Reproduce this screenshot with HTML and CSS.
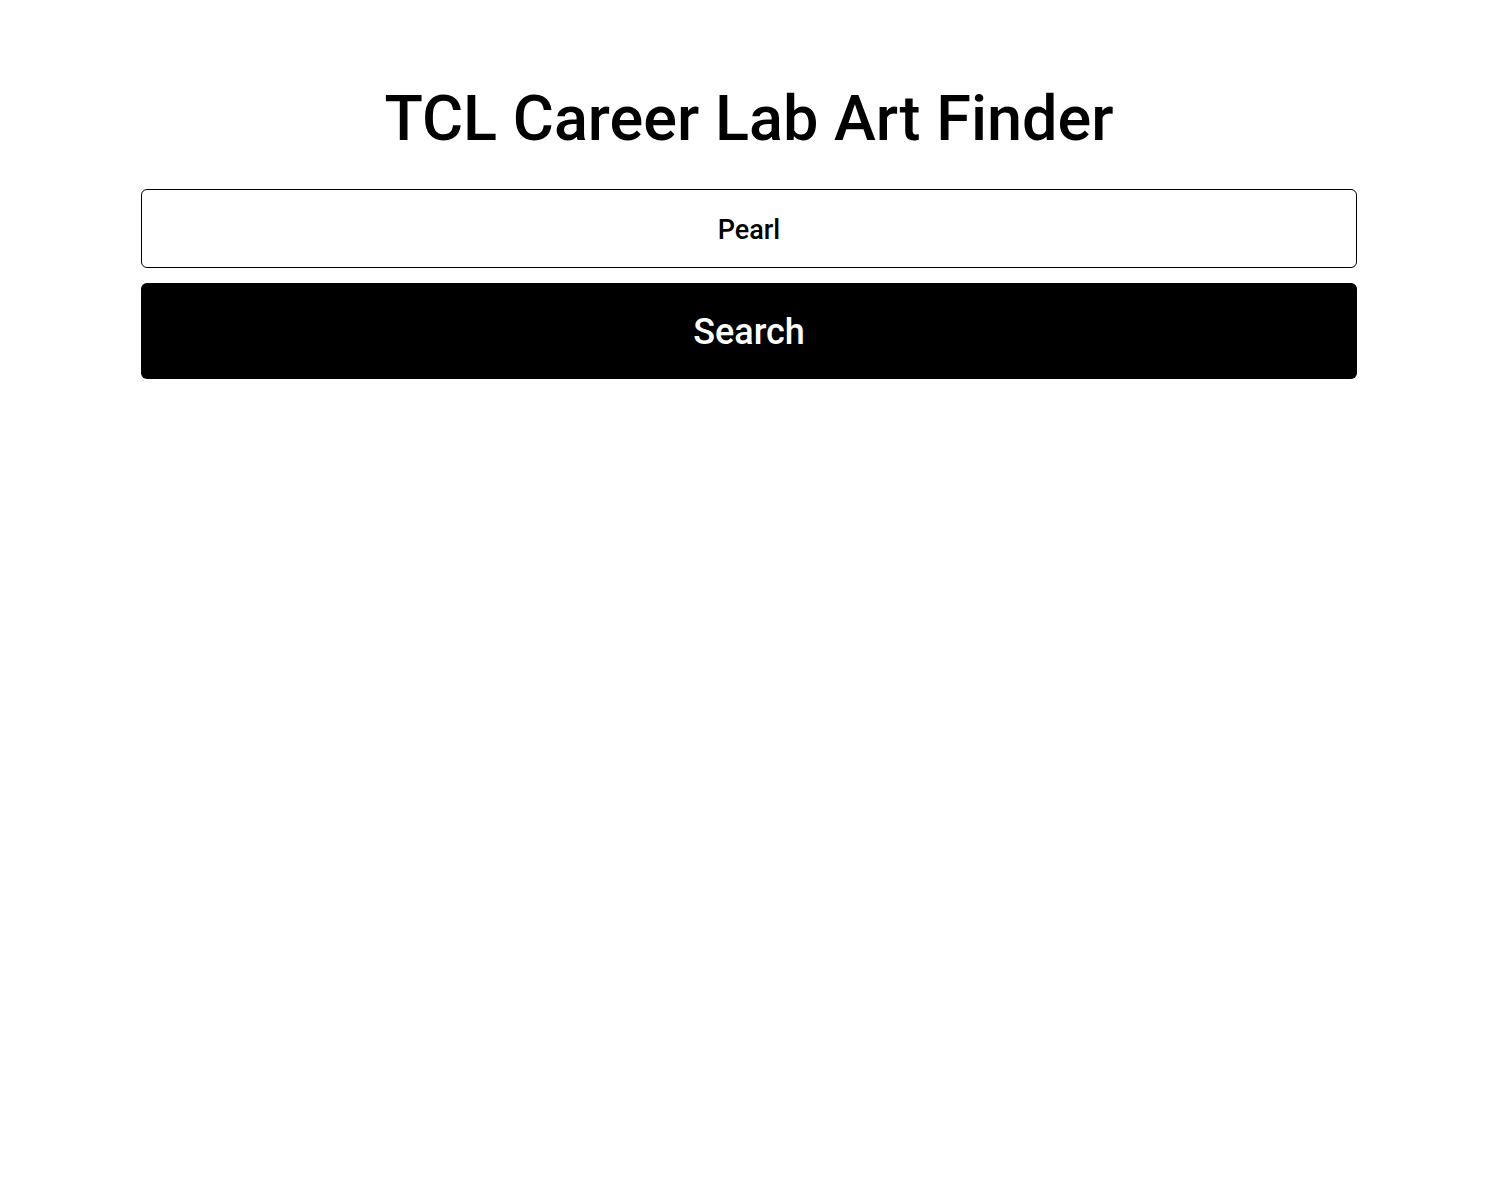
FILE: index.html
```html
<!DOCTYPE html>
<html>
<head>
<meta charset="utf-8">
<link rel="stylesheet" href="styles.css">
</head>
<body>
<main class="page">
  <h1 class="title">TCL Career Lab Art Finder</h1>
  <form class="search-form">
    <input class="search-input" type="text" value="Pearl">
    <button class="search-button" type="button">Search</button>
  </form>
</main>
</body>
</html>
```

FILE: styles.css
```css
html, body {
  margin: 0;
  padding: 0;
  background: #fff;
}
body {
  padding-right: 2px;
  font-family: Roboto, "Liberation Sans", sans-serif;
  color: #000;
}
.page {
  width: 1216px;
  margin: 0 auto;
  padding-top: 80px;
  display: flex;
  flex-direction: column;
}
.title {
  margin: 0 0 32px;
  font-size: 63px;
  font-weight: 500;
  line-height: 77px;
  text-align: center;
}
.search-form {
  display: flex;
  flex-direction: column;
  gap: 15px;
}
.search-input {
  box-sizing: border-box;
  height: 79px;
  width: 100%;
  border: 1.5px solid #000;
  border-radius: 6px;
  font-family: Roboto, "Liberation Sans", sans-serif;
  font-size: 27px;
  font-weight: 500;
  text-align: center;
  color: #000;
  background: #fff;
  padding: 2px 16px 0;
  outline: none;
}
.search-button {
  box-sizing: border-box;
  height: 96px;
  width: 100%;
  border: none;
  border-radius: 6px;
  background: #000;
  color: #fff;
  font-family: Roboto, "Liberation Sans", sans-serif;
  font-size: 36px;
  font-weight: 500;
  padding: 2px 0 0;
}
```
